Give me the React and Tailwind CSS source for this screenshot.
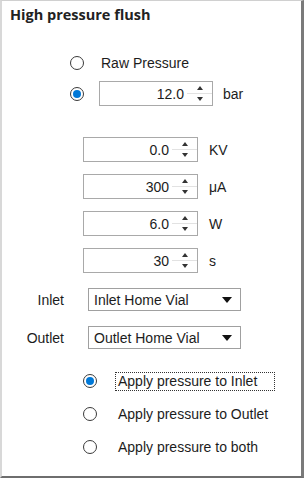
import React from 'react';

const Radio = ({ checked }) => (
  <span className="w-[14px] h-[14px] rounded-full border-[1.5px] border-[#3a3a3a] bg-white flex items-center justify-center shrink-0">
    {checked && <span className="w-[8px] h-[8px] rounded-full bg-[#0078d7]" />}
  </span>
);

const Spin = ({ value, width = 'w-[115px]' }) => (
  <div className={`${width} h-[25px] border border-[#a9a9a9] bg-white flex items-center`}>
    <span className="flex-1 text-right pr-[3px] text-[14px] leading-none">{value}</span>
    <div className="w-[25px] h-full flex flex-col items-center justify-center">
      <svg width="6" height="4" viewBox="0 0 6 4" className="mb-[3px]">
        <path d="M3 0 L6 4 L0 4 Z" fill="#333" />
      </svg>
      <div className="w-full h-px bg-[#e2e2e2]" />
      <svg width="6" height="4" viewBox="0 0 6 4" className="mt-[3px]">
        <path d="M0 0 L6 0 L3 4 Z" fill="#333" />
      </svg>
    </div>
  </div>
);

const Select = ({ value }) => (
  <div className="w-[153px] h-[23px] border border-[#a0a0a0] bg-white flex items-center pl-[5px] pr-[8px]">
    <span className="flex-1 text-[14px] leading-none">{value}</span>
    <svg width="10" height="6" viewBox="0 0 10 6">
      <path d="M0 0 L10 0 L5 6 Z" fill="#111" />
    </svg>
  </div>
);

const App = () => {
  return (
    <div
      className="w-[304px] h-[478px] bg-white border-t border-l-2 border-t-[#d0d0d0] border-l-[#d8d8d8] border-r-[3px] border-b-[2px] border-r-[#7a7a7a] border-b-[#6e6e6e] text-[#1c1c1c] flex flex-col"
      style={{ fontFamily: '"Liberation Sans", Arial, sans-serif' }}
    >
      <h1
        className="pl-[8px] pt-[4px] text-[14.5px] font-bold leading-[19px] text-[#222]"
        style={{ fontFamily: '"Open Sans", "Noto Sans", sans-serif' }}
      >
        High pressure flush
      </h1>

      <div className="mt-[29px] flex items-center h-[20px] pl-[68px]">
        <Radio />
        <span className="ml-[17px] text-[14px] leading-none">Raw Pressure</span>
      </div>

      <div className="mt-[8px] flex items-center pl-[68px]">
        <Radio checked />
        <div className="ml-[15px]">
          <Spin value="12.0" width="w-[114px]" />
        </div>
        <span className="ml-[10px] text-[14px] leading-none">bar</span>
      </div>

      <div className="mt-[31px] flex flex-col gap-[12px] pl-[81px]">
        {[
          ['0.0', 'KV'],
          ['300', 'μA'],
          ['6.0', 'W'],
          ['30', 's'],
        ].map(([v, u], i) => (
          <div key={i} className="flex items-center">
            <Spin value={v} />
            <span className="ml-[11px] text-[14px] leading-none">{u}</span>
          </div>
        ))}
      </div>

      <div className="mt-[15px] flex flex-col gap-[15px]">
        <div className="flex items-center">
          <span className="w-[62px] text-right text-[14px] leading-none">Inlet</span>
          <div className="ml-[24px]">
            <Select value="Inlet Home Vial" />
          </div>
        </div>
        <div className="flex items-center">
          <span className="w-[62px] text-right text-[14px] leading-none">Outlet</span>
          <div className="ml-[24px]">
            <Select value="Outlet Home Vial" />
          </div>
        </div>
      </div>

      <div className="mt-[22px] flex flex-col gap-[13px] pl-[81px]">
        <div className="flex items-center h-[20px]">
          <Radio checked />
          <span className="ml-[18px] pl-[2px] w-[160px] h-[19px] flex items-center border border-dotted border-[#333] text-[14px] leading-none">
            Apply pressure to Inlet
          </span>
        </div>
        <div className="flex items-center h-[20px]">
          <Radio />
          <span className="ml-[21px] text-[14px] leading-none">Apply pressure to Outlet</span>
        </div>
        <div className="flex items-center h-[20px]">
          <Radio />
          <span className="ml-[21px] text-[14px] leading-none">Apply pressure to both</span>
        </div>
      </div>
    </div>
  );
};

export default App;
